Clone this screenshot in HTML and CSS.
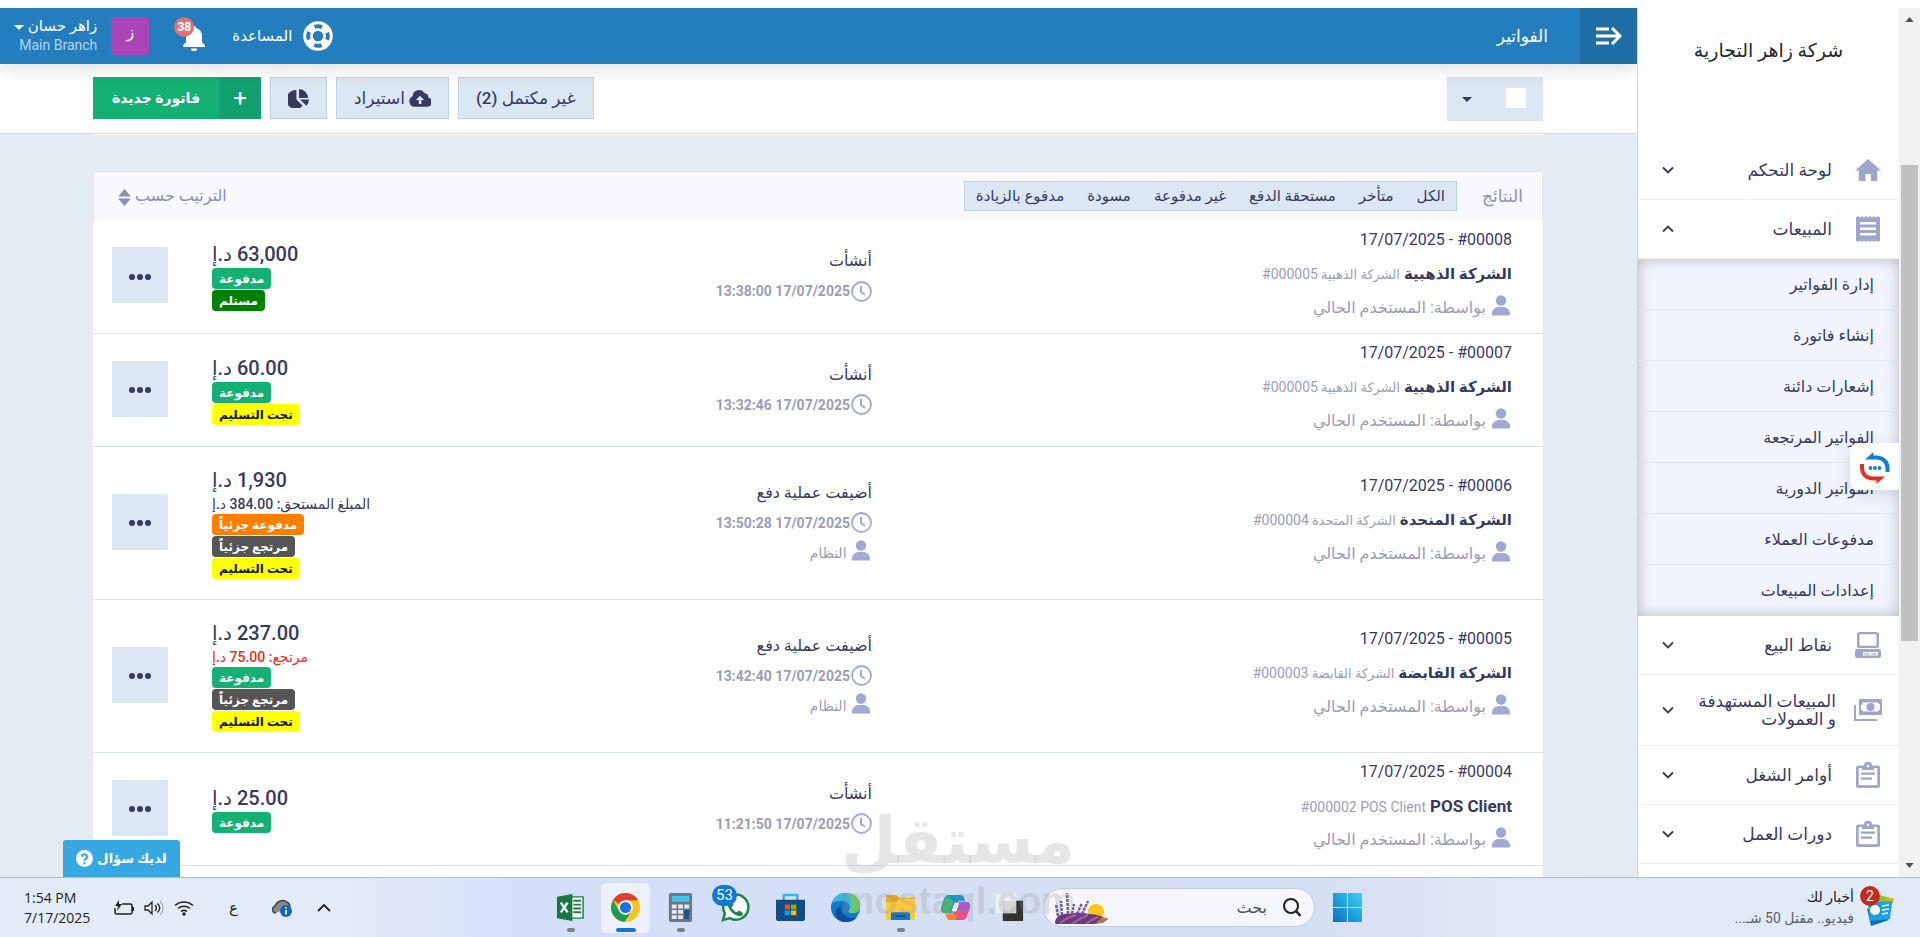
FILE: index.html
```html
<!DOCTYPE html>
<html lang="ar" dir="rtl">
<head>
  <meta charset="UTF-8">
  <meta name="viewport" content="width=device-width, initial-scale=1.0">
  <title>الفواتير</title>
  <link rel="stylesheet" href="styles.css">
</head>
<body>
  <svg class="sprite" aria-hidden="true">
    <symbol id="i-user" viewBox="0 0 18 21"><circle cx="9" cy="5.5" r="5.2"/><path d="M0 20.500V18.500C0 14.500 3.500 12 7 12h4c3.500 0 7 2.500 7 6.500v2z"/></symbol>
    <symbol id="i-clock" viewBox="0 0 21 21"><circle cx="10.500" cy="10.500" r="9.500" fill="none" stroke="currentColor" stroke-width="1.800"/><path d="M10 5v6l4 2.800" fill="none" stroke="currentColor" stroke-width="2"/></symbol>
    <symbol id="i-down" viewBox="0 0 12 8"><path d="M1 1.500l5 5 5-5" fill="none" stroke="currentColor" stroke-width="1.900"/></symbol>
    <symbol id="i-clip" viewBox="0 0 24 26"><path d="M2.500 3.500H8a4 4 0 0 1 8 0h5.500A2.500 2.500 0 0 1 24 6v17.500a2.500 2.500 0 0 1-2.500 2.500h-19A2.500 2.500 0 0 1 0 23.500V6a2.500 2.500 0 0 1 2.500-2.500zM2.700 6v17.300h18.600V6H18v2H6V6zM5 10.500v2.200h14v-2.200zM5 15.500v2.300h11v-2.300z" fill-rule="evenodd"/><circle cx="12" cy="4" r="1.200" fill="#fff"/></symbol>
    <symbol id="i-dots" viewBox="0 0 24 8"><circle cx="4" cy="4" r="3"/><circle cx="12" cy="4" r="3"/><circle cx="20" cy="4" r="3"/></symbol>
  </svg>

  <div class="app">
    <div class="scrollbar">
      <svg class="arrow" viewBox="0 0 10 6"><path d="M0 6l5-6 5 6z"/></svg>
      <div class="thumb"></div>
      <svg class="arrow" viewBox="0 0 10 6"><path d="M0 0l5 6 5-6z"/></svg>
    </div>

    <nav class="sidebar">
      <div class="company">شركة زاهر التجارية</div>
      <a class="item" href="#">
        <svg class="item-icon" viewBox="0 0 26 26"><path d="M13 2l13 11.500h-3.700V24H16v-7h-5.500v7H3.700V13.500H0z"/></svg>
        <span>لوحة التحكم</span>
        <svg class="chevron"><use href="#i-down"/></svg>
      </a>
      <a class="item open" href="#">
        <svg class="item-icon" viewBox="0 0 26 26"><path d="M1 1.500l2-1.500 2 1.500L7 0l2 1.500L11 0l2 1.500L15 0l2 1.500L19 0l2 1.500L23 0l2 1.500v23L23 26l-2-1.500-2 1.500-2-1.500-2 1.500-2-1.500-2 1.500-2-1.500L7 26l-2-1.500L3 26l-2-1.500zM5 6v2.500h16V6zm0 5.500V14h16v-2.500zM5 17v2.500h16V17z" fill-rule="evenodd"/></svg>
        <span>المبيعات</span>
        <svg class="chevron"><use href="#i-down"/></svg>
      </a>
      <div class="submenu">
        <a href="#">إدارة الفواتير</a>
        <a href="#">إنشاء فاتورة</a>
        <a href="#">إشعارات دائنة</a>
        <a href="#">الفواتير المرتجعة</a>
        <a href="#">الفواتير الدورية</a>
        <a href="#">مدفوعات العملاء</a>
        <a href="#">إعدادات المبيعات</a>
      </div>
      <a class="item" href="#">
        <svg class="item-icon" viewBox="0 0 26 26"><path d="M4.500 0h17A2.500 2.500 0 0 1 24 2.500v11a2.500 2.500 0 0 1-2.500 2.500h-17A2.500 2.500 0 0 1 2 13.500v-11A2.500 2.500 0 0 1 4.500 0zm0 2.200v11.600h17V2.200zM2.500 17h21a2.500 2.500 0 0 1 2.500 2.500v4a2.500 2.500 0 0 1-2.500 2.500h-21A2.500 2.500 0 0 1 0 23.500v-4A2.500 2.500 0 0 1 2.500 17zM8 20v3.500h15V20zm1.300 1.200h5v1.200h-5zm7 0h5v1.200h-5z" fill-rule="evenodd"/></svg>
        <span>نقاط البيع</span>
        <svg class="chevron"><use href="#i-down"/></svg>
      </a>
      <a class="item tall" href="#">
        <svg class="item-icon" viewBox="0 0 28 22"><path d="M5 0h23v16H5zm3.500 3v2A2 2 0 0 1 7 6v4.500a2.500 2.500 0 0 1 2 2h15a2.500 2.500 0 0 1 2-2V5.500a2.500 2.500 0 0 1-2-2H9zM0 6h2v14h21v2H0z" fill-rule="evenodd"/><circle cx="16.500" cy="8" r="4"/></svg>
        <span>المبيعات المستهدفة<br>و العمولات</span>
        <svg class="chevron"><use href="#i-down"/></svg>
      </a>
      <a class="item" href="#">
        <svg class="item-icon"><use href="#i-clip"/></svg>
        <span>أوامر الشغل</span>
        <svg class="chevron"><use href="#i-down"/></svg>
      </a>
      <a class="item" href="#">
        <svg class="item-icon"><use href="#i-clip"/></svg>
        <span>دورات العمل</span>
        <svg class="chevron"><use href="#i-down"/></svg>
      </a>
      <button class="chat-widget" aria-label="chat">
        <svg viewBox="0 0 30 32"><path d="M5 7.500L13.500 0v3.500H16c8 0 13.500 5 13.500 12V20h-4v-3C25.500 10.500 21 7.500 16 7.500z" fill="#0f7fdc"/><path d="M25 24.500L16.500 32v-3.500H14C5.500 28.500 0 23 0 16v-4h4v3.500c0 6.500 4.500 9 10 9z" fill="#e03122"/><g fill="#0f7fdc"><circle cx="10.500" cy="16" r="1.900"/><circle cx="15" cy="16" r="1.900"/><circle cx="19.500" cy="16" r="1.900"/></g></svg>
      </button>
    </nav>

    <main class="main">
      <header class="header">
        <button class="toggle" aria-label="menu">
          <svg viewBox="0 0 26 18"><path d="M0 2h13M0 9h23M0 16h13M16 1l8 8-8 8" fill="none" stroke="#fff" stroke-width="3"/></svg>
        </button>
        <h1>الفواتير</h1>
        <a class="help" href="#">
          <svg viewBox="0 0 30 30"><circle cx="15" cy="15" r="10" fill="none" stroke="#fff" stroke-width="9.500"/><circle cx="15" cy="15" r="9.800" fill="none" stroke="#247dbd" stroke-width="4" stroke-dasharray="7.700 7.700" stroke-dashoffset="3.850"/></svg>
          <span>المساعدة</span>
        </a>
        <a class="bell" href="#">
          <svg viewBox="0 0 22 25"><path d="M11 0a2 2 0 0 1 2 2c4 1 6 4.500 6 8v6l3 3.500V21H0v-1.500L3 16v-6c0-3.500 2-7 6-8a2 2 0 0 1 2-2zM8 22.500h6a3 3 0 0 1-6 0z" fill="#fff"/></svg>
          <span class="count">38</span>
        </a>
        <span class="avatar">ز</span>
        <button class="account">
          <span class="account-name">زاهر حسان <i class="caret"></i></span>
          <span class="branch">Main Branch</span>
        </button>
      </header>

      <div class="toolbar">
        <div class="select-all">
          <input type="checkbox" aria-label="تحديد الكل">
          <i class="caret"></i>
        </div>
        <div class="actions">
          <button class="btn">غير مكتمل (2)</button>
          <button class="btn">
            <svg class="cloud" viewBox="0 0 24 18"><path d="M6 18a6 6 0 0 1-2-11.500A7 7 0 0 1 17 3.200 4 4 0 0 1 21 8a5 5 0 0 1-2 10zm4.700-3h2.800v-4.500h3L12 6l-4.500 4.500h3.200z" fill-rule="evenodd"/></svg>
            استيراد
          </button>
          <button class="btn pie" aria-label="التقارير">
            <svg viewBox="0 0 20 18"><path d="M8 1v9l6 6A9 9 0 1 1 8 1z"/><path d="M10.500 0A8.500 8.500 0 0 1 19 8.500h-8.500zM11.500 10H20a9 9 0 0 1-2.500 6z"/></svg>
          </button>
          <button class="btn-new"><span class="plus">+</span><span class="label">فاتورة جديدة</span></button>
        </div>
      </div>

      <div class="content">
        <section class="card">
          <div class="card-head">
            <h2>النتائج</h2>
            <div class="filters">
              <a href="#">الكل</a>
              <a href="#">متأخر</a>
              <a href="#">مستحقة الدفع</a>
              <a href="#">غير مدفوعة</a>
              <a href="#">مسودة</a>
              <a href="#">مدفوع بالزيادة</a>
            </div>
            <button class="sort">الترتيب حسب
              <svg viewBox="0 0 12 16"><path d="M0 7l6-7 6 7zM0 9l6 7 6-7z"/></svg>
            </button>
          </div>

          <table class="invoices">
            <tr>
              <td class="client">
                <div><bdi dir="ltr">17/07/2025 - #00008</bdi></div>
                <div><b>الشركة الذهبية</b> <small>الشركة الذهبية <bdi dir="ltr">#000005</bdi></small></div>
                <div class="by"><svg class="user"><use href="#i-user"/></svg> بواسطة: <span>المستخدم الحالي</span></div>
              </td>
              <td class="status">
                <div>أنشأت</div>
                <div class="time"><svg><use href="#i-clock"/></svg><bdi dir="ltr">13:38:00 17/07/2025</bdi></div>
              </td>
              <td class="amount">
                <div class="price">63,000 د.إ</div>
                <div><span class="badge paid">مدفوعة</span></div>
                <div><span class="badge received">مستلم</span></div>
              </td>
              <td class="more"><button aria-label="خيارات"><svg><use href="#i-dots"/></svg></button></td>
            </tr>
            <tr>
              <td class="client">
                <div><bdi dir="ltr">17/07/2025 - #00007</bdi></div>
                <div><b>الشركة الذهبية</b> <small>الشركة الذهبية <bdi dir="ltr">#000005</bdi></small></div>
                <div class="by"><svg class="user"><use href="#i-user"/></svg> بواسطة: <span>المستخدم الحالي</span></div>
              </td>
              <td class="status">
                <div>أنشأت</div>
                <div class="time"><svg><use href="#i-clock"/></svg><bdi dir="ltr">13:32:46 17/07/2025</bdi></div>
              </td>
              <td class="amount">
                <div class="price">60.00 د.إ</div>
                <div><span class="badge paid">مدفوعة</span></div>
                <div><span class="badge pending">تحت التسليم</span></div>
              </td>
              <td class="more"><button aria-label="خيارات"><svg><use href="#i-dots"/></svg></button></td>
            </tr>
            <tr>
              <td class="client">
                <div><bdi dir="ltr">17/07/2025 - #00006</bdi></div>
                <div><b>الشركة المنحدة</b> <small>الشركة المتحدة <bdi dir="ltr">#000004</bdi></small></div>
                <div class="by"><svg class="user"><use href="#i-user"/></svg> بواسطة: <span>المستخدم الحالي</span></div>
              </td>
              <td class="status">
                <div>أضيفت عملية دفع</div>
                <div class="time"><svg><use href="#i-clock"/></svg><bdi dir="ltr">13:50:28 17/07/2025</bdi></div>
                <div class="system"><svg class="user"><use href="#i-user"/></svg> النظام</div>
              </td>
              <td class="amount">
                <div class="price">1,930 د.إ</div>
                <div class="note">المبلغ المستحق: 384.00 د.إ</div>
                <div><span class="badge partial">مدفوعة جزئياً</span></div>
                <div><span class="badge returned">مرتجع جزئياً</span></div>
                <div><span class="badge pending">تحت التسليم</span></div>
              </td>
              <td class="more"><button aria-label="خيارات"><svg><use href="#i-dots"/></svg></button></td>
            </tr>
            <tr>
              <td class="client">
                <div><bdi dir="ltr">17/07/2025 - #00005</bdi></div>
                <div><b>الشركة القابضة</b> <small>الشركة القابضة <bdi dir="ltr">#000003</bdi></small></div>
                <div class="by"><svg class="user"><use href="#i-user"/></svg> بواسطة: <span>المستخدم الحالي</span></div>
              </td>
              <td class="status">
                <div>أضيفت عملية دفع</div>
                <div class="time"><svg><use href="#i-clock"/></svg><bdi dir="ltr">13:42:40 17/07/2025</bdi></div>
                <div class="system"><svg class="user"><use href="#i-user"/></svg> النظام</div>
              </td>
              <td class="amount">
                <div class="price">237.00 د.إ</div>
                <div class="note refund">مرتجع: 75.00 د.إ</div>
                <div><span class="badge paid">مدفوعة</span></div>
                <div><span class="badge returned">مرتجع جزئياً</span></div>
                <div><span class="badge pending">تحت التسليم</span></div>
              </td>
              <td class="more"><button aria-label="خيارات"><svg><use href="#i-dots"/></svg></button></td>
            </tr>
            <tr>
              <td class="client">
                <div><bdi dir="ltr">17/07/2025 - #00004</bdi></div>
                <div><b><bdi>POS Client</bdi></b> <small><bdi dir="ltr">#000002 POS Client</bdi></small></div>
                <div class="by"><svg class="user"><use href="#i-user"/></svg> بواسطة: <span>المستخدم الحالي</span></div>
              </td>
              <td class="status">
                <div>أنشأت</div>
                <div class="time"><svg><use href="#i-clock"/></svg><bdi dir="ltr">11:21:50 17/07/2025</bdi></div>
              </td>
              <td class="amount">
                <div class="price">25.00 د.إ</div>
                <div><span class="badge paid">مدفوعة</span></div>
              </td>
              <td class="more"><button aria-label="خيارات"><svg><use href="#i-dots"/></svg></button></td>
            </tr>
          </table>
        </section>
      </div>

      <button class="question">لديك سؤال
        <svg viewBox="0 0 16 16"><circle cx="8" cy="8" r="8" fill="#fff"/><path d="M5.500 6.300a2.500 2.300 0 1 1 3.700 2C8.300 8.800 8 9.200 8 10M8 11.300v2" fill="none" stroke="#37a8e2" stroke-width="2"/></svg>
      </button>
    </main>
  </div>

  <footer class="taskbar">
    <div class="news">
      <span class="news-icon">
        <svg viewBox="0 0 30 36"><path d="M12 4l18 5-4 12-16-4z" fill="#8fc31f"/><path d="M22 8l8 1-3 8z" fill="#f2b01e"/><path d="M3 18l22 12-18 6z" fill="#0a6fae"/><path d="M4 13l24-2-2 18-20 2z" fill="#1c9fe8"/><circle cx="11" cy="20" r="5" fill="#fff"/><path d="M18 16l7-1M18 20l7-1M18 24l6-1" stroke="#fff" stroke-width="1.500"/></svg>
        <span class="news-count">2</span>
      </span>
      <div>
        <div>أخبار لك</div>
        <div class="sub">فيديو.. مقتل 50 شـ...</div>
      </div>
    </div>

    <div class="dock">
      <button class="slot" aria-label="Start"><svg viewBox="0 0 30 30"><defs><linearGradient id="win" x1="1" y1="0" x2="0" y2="1"><stop offset="0" stop-color="#3fd0f5"/><stop offset="1" stop-color="#0670c8"/></linearGradient></defs><path d="M0 0h14.500v14.500H0zM15.500 0H30v14.500H15.500zM0 15.500h14.500V30H0zM15.500 15.500H30V30H15.500z" fill="url(#win)"/></svg></button>
      <label class="search">
        <svg class="lens" viewBox="0 0 18 19"><circle cx="8" cy="8" r="7" fill="none" stroke="#222" stroke-width="2"/><path d="M13 13l4.500 5" stroke="#222" stroke-width="2.500"/></svg>
        <input type="text" placeholder="بحث">
        <svg class="lavender" viewBox="0 0 54 32"><circle cx="42" cy="20" r="8" fill="#fcc419"/><path d="M1 31c0-6 6-10 14-9 8-2 14-1 20 0 8 0 14 3 19 5-4 4-10 5-18 5H2z" fill="#6b3a86"/><path d="M6 31q8-6 16-8M18 32q8-6 16-9M32 32q6-5 12-7" fill="none" stroke="#a9608c" stroke-width="2"/><path d="M42 31l6-6 6 2-5 4z" fill="#b5793f"/><path d="M4 24L2 12M8 23L7 9M14 22L13 1M18 22l2-10M23 22l5-11M28 22l6-13" stroke="#6d5b93" stroke-width="2.500" stroke-dasharray="3 1"/></svg>
      </label>
      <button class="slot" aria-label="Task view"><svg viewBox="0 0 30 30"><path d="M7 8h21v21H7z" fill="#333"/><path d="M0 1h21v20H0z" fill="#f4f4f4" opacity=".85"/></svg></button>
      <button class="slot" aria-label="Copilot"><svg viewBox="0 0 30 30"><path d="M8 2h12c3 0 4 2 5 6h-7l-6 13H4c-4 0-5-4-3-9 2-6 3-10 7-10z" fill="#1793d1"/><path d="M1 13l4-9 8 4-4 13H4c-3 0-4-3-3-8z" fill="#43b56f"/><path d="M22 28H10c-3 0-4-2-5-6h7l6-13h8c4 0 5 4 3 9-2 6-3 10-7 10z" fill="#e8508d"/><path d="M18 9h8c4 0 5 4 3 9H15z" fill="#a957d0"/><path d="M5 22h12l-2 6h-5c-3 0-4-2-5-6z" fill="#f1892f"/><path d="M14 10h5l-3 9h-5z" fill="#fff"/></svg></button>
      <button class="slot running" aria-label="Files"><svg viewBox="0 0 30 28"><path d="M0 1h11l3 3h16v23H0z" fill="#e9a820"/><path d="M0 8h11l3-3h16v22H0z" fill="#fdcb3d"/><path d="M5 27v-6a2 2 0 0 1 2-2h16a2 2 0 0 1 2 2v6z" fill="#1878c8"/><path d="M10 23h10" stroke="#0d4e8c" stroke-width="2"/></svg></button>
      <button class="slot" aria-label="Edge"><svg viewBox="0 0 30 30"><circle cx="15" cy="15" r="15" fill="#1478cc"/><path d="M1 11C3 3 9 0 15 0c9 0 15 6 15 13 0 5-4 8-8 8-3 0-4-1-4-2 1-2 2-3 1-6-2-5-11-7-18-2z" fill="#39b8d8"/><path d="M17 0c8 1 13 7 13 13 0 5-4 8-8 8-3 0-4-1-4-2 5-5 4-13-1-19z" fill="#6acb62"/><path d="M11 13c-3 7 4 15 16 12-5 6-14 6-19 3-6-5-4-13 3-15z" fill="#0b4f9c"/></svg></button>
      <button class="slot" aria-label="Store"><svg viewBox="0 0 30 30"><path d="M8 8V2h14v6" fill="none" stroke="#36b3ea" stroke-width="2.500"/><path d="M0 7h30v19a3 3 0 0 1-3 3H3a3 3 0 0 1-3-3z" fill="#174a80"/><path d="M9 12h5.500v5H9z" fill="#f25022"/><path d="M15.500 12H21v5h-5.500z" fill="#7fba00"/><path d="M9 18h5.500v5H9z" fill="#00a4ef"/><path d="M15.500 18H21v5h-5.500z" fill="#ffb900"/></svg></button>
      <button class="slot" aria-label="WhatsApp"><svg viewBox="0 0 30 30"><path d="M2 28l2-7a13 13 0 1 1 5 5z" fill="#fff" stroke="#19854a" stroke-width="2.500"/><path d="M10 8l3 4-2 3c1 2 3 4 5 5l3-2 4 3c-1 3-4 4-7 2-5-2-8-6-9-10 0-2 1-4 3-5z" fill="#19854a"/></svg><span class="msg-count">53</span></button>
      <button class="slot running" aria-label="Calculator"><svg viewBox="0 0 30 30"><rect x="3" width="24" height="30" rx="2" fill="#6f7880"/><path d="M6 3h18v6H6z" fill="#45c4f0"/><path d="M6 12h5v4H6zM12.500 12h5v4h-5zM19 12h5v4h-5zM6 17.500h5v4H6zM12.500 17.500h5v4h-5zM6 23h5v4H6zM12.500 23h5v4h-5z" fill="#e6e9ec"/><path d="M19 17.500h5V27h-5z" fill="#17528f"/></svg></button>
      <button class="slot active" aria-label="Chrome"><svg viewBox="0 0 30 30"><circle cx="15" cy="15" r="15" fill="#fcc31e"/><path d="M15 15L2 7.500A15 15 0 0 1 28 7.500H15z" fill="#e33b2e"/><path d="M2 7.500A15 15 0 0 0 14 30l7.500-11.500L15 15 8.500 18.500z" fill="#239a52"/><circle cx="15" cy="15" r="7.500" fill="#fff"/><circle cx="15" cy="15" r="5.800" fill="#1b72e0"/></svg></button>
      <button class="slot running" aria-label="Excel"><svg viewBox="0 0 30 30"><path d="M15 4h13v22H15z" fill="#fff" stroke="#1f7a45" stroke-width="1.500"/><path d="M18 8h8M18 12h8M18 16h8M18 20h8" stroke="#1f7a45" stroke-width="2"/><path d="M1 4l16-3v28L1 26z" fill="#1b7742"/><path d="M5 10l7 10M12 10L5 20" stroke="#fff" stroke-width="2.500"/></svg></button>
    </div>

    <div class="tray">
      <svg class="tray-up" viewBox="0 0 14 9"><path d="M1 8l6-6 6 6" fill="none" stroke="#222" stroke-width="1.800"/></svg>
      <svg class="tray-cloud" viewBox="0 0 20 18"><path d="M4 14c-4 0-5-5-1-7C5 2 11 0 15 3c2 1 3 3 3 5" fill="#8a8a8a" stroke="#444" stroke-width="1.400"/><circle cx="14" cy="12" r="6" fill="#1069bd"/><path d="M14 8v1.600M14 11v4.500" stroke="#fff" stroke-width="1.600"/></svg>
      <span class="lang">ع</span>
      <div class="system-icons">
        <svg viewBox="0 0 20 16"><g fill="none" stroke="#222" stroke-width="1.500"><path d="M1 5.500a13 13 0 0 1 18 0M4 8.500a9 9 0 0 1 12 0M7 11.500a5 5 0 0 1 6 0"/></g><circle cx="10" cy="14" r="1.700"/></svg>
        <svg viewBox="0 0 20 16"><path d="M1 6h3l4-4v12l-4-4H1zM11 5c2 2 2 4 0 6M13.500 3.500c3 3 3 6 0 9" fill="none" stroke="#222" stroke-width="1.300"/><path d="M16 1c4 4 4 10 0 14" fill="none" stroke="#aaa" stroke-width="1.200"/></svg>
        <svg viewBox="0 0 20 16"><path d="M8 4h8.500a1.500 1.500 0 0 1 1.500 1.500v7a1.500 1.500 0 0 1-1.500 1.500h-14A1.500 1.500 0 0 1 1 12.500V8" fill="none" stroke="#222" stroke-width="1.500"/><path d="M18 7h2v4h-2zM5 0L1 6h3l-1 5 5-7H5z"/></svg>
      </div>
      <div class="clock">
        <div>1:54 PM</div>
        <div>7/17/2025</div>
      </div>
    </div>
  </footer>

  <div class="watermark">
    <div class="watermark-ar">مستقل</div>
    <div class="watermark-en">mostaql.com</div>
  </div>
</body>
</html>
```

FILE: styles.css
```css
:root {
  --text: #373a5e;
  --muted: #9b9db5;
  --icon: #9fa6cb;
  --icon-blue: #9fa9d6;
  --blue: #247dbd;
  --green: #15b073;
  --soft: #dbe7f2;
  --line: #dee3e6;
}
* {
  box-sizing: border-box;
}
body {
  margin: 0;
  height: 100vh;
  overflow: hidden;
  display: flex;
  flex-direction: column;
  padding-top: 8px;
  font-family: Roboto, "DejaVu Sans", sans-serif;
  font-size: 16px;
  color: var(--text);
  background: #fff;
}
a {
  color: inherit;
  text-decoration: none;
}
button {
  font: inherit;
  color: inherit;
  border: none;
  padding: 0;
  background: none;
  cursor: pointer;
}
svg {
  fill: currentColor;
}
.sprite {
  display: none;
}
.app {
  flex: 1;
  min-height: 0;
  display: flex;
}

/* scrollbar */
.scrollbar {
  width: 21px;
  background: #f1f1f1;
  display: flex;
  flex-direction: column;
  align-items: center;
  padding: 9px 0;
  color: #505050;
}
.arrow {
  width: 9px;
  height: 5px;
}
.thumb {
  width: 17px;
  height: 476px;
  margin: 143px 0 auto;
  background: #c1c1c1;
}

/* sidebar */
.sidebar {
  position: relative;
  width: 262px;
  background: #fff;
  border-left: 1px solid #ced2d6;
  overflow: hidden;
}
.company {
  height: 133px;
  padding-top: 28px;
  text-align: center;
  font-size: 19px;
  line-height: 30px;
  color: #26282c;
}
.item {
  display: flex;
  align-items: center;
  height: 59px;
  padding: 0 17px 0 24px;
  border-bottom: 1px solid #eef0f1;
  font-size: 17px;
  font-weight: 500;
}
.item span {
  flex: 1;
  padding-right: 22px;
}
.item.tall {
  height: 71px;
  line-height: 18px;
}
.item.tall span {
  padding-right: 18px;
}
.item-icon {
  width: 28px;
  height: 26px;
  color: var(--icon);
}
.chevron {
  width: 12px;
  height: 8px;
}
.open .chevron {
  transform: rotate(180deg);
}
.submenu {
  background: #f1f4fc;
  box-shadow: inset 0 0 14px rgba(0, 0, 0, 0.25);
}
.submenu a {
  display: flex;
  align-items: center;
  height: 51px;
  padding-right: 25px;
  border-bottom: 1px solid #e2e6eb;
  font-weight: 500;
}
.submenu a:last-child {
  border-bottom: none;
}
.chat-widget {
  position: absolute;
  right: 0;
  top: 435px;
  width: 49px;
  height: 47px;
  padding: 6px 0 0;
  background: #fff;
  border-radius: 8px 0 0 8px;
  box-shadow: 0 4px 16px rgba(0, 0, 0, 0.12);
}
.chat-widget svg {
  width: 30px;
  height: 32px;
}

/* header */
.main {
  position: relative;
  flex: 1;
  min-width: 0;
  display: flex;
  flex-direction: column;
  overflow: hidden;
  background: #e4ebf2;
}
.header {
  position: relative;
  flex: none;
  display: flex;
  align-items: center;
  height: 56px;
  padding-left: 14px;
  background: var(--blue);
  color: #fff;
  box-shadow: 0 6px 18px rgba(0, 0, 0, 0.12);
}
.toggle {
  width: 57px;
  height: 56px;
  background: #206ea6;
}
.toggle svg {
  display: block;
  width: 26px;
  height: 18px;
  margin: 0 auto;
}
.header h1 {
  margin: 0 32px 0 auto;
  font-size: 17px;
  font-weight: 400;
}
.help {
  display: flex;
  align-items: center;
  gap: 11px;
  font-size: 15px;
}
.help svg {
  width: 30px;
  height: 30px;
}
.bell {
  position: relative;
  margin: 4px 27px 0 34px;
}
.bell svg {
  display: block;
  width: 22px;
  height: 25px;
}
.count {
  position: absolute;
  left: -9px;
  top: -9px;
  width: 20px;
  height: 20px;
  border-radius: 50%;
  background: #de7173;
  font-size: 12px;
  font-weight: 700;
  line-height: 20px;
  text-align: center;
}
.avatar {
  width: 38px;
  height: 38px;
  border-radius: 4px;
  background: #a945b9;
  text-align: center;
  line-height: 30px;
}
.account {
  margin-right: 14px;
  text-align: right;
  color: #fff;
}
.account span {
  display: block;
  line-height: 19px;
}
.account .branch {
  font-size: 14px;
  color: #b5d5ee;
}
.account-name {
  font-size: 15px;
}
.caret {
  display: inline-block;
  border: 5px solid transparent;
  border-top-color: currentColor;
  border-bottom: none;
  vertical-align: middle;
}

/* toolbar */
.toolbar {
  flex: none;
  display: flex;
  justify-content: space-between;
  height: 70px;
  padding: 13px 94px 0 93px;
  background: #fff;
  border-bottom: 1px solid #d6dce2;
}
.select-all {
  display: flex;
  align-items: center;
  gap: 34px;
  width: 96px;
  height: 44px;
  padding-right: 17px;
  background: var(--soft);
}
.select-all input {
  appearance: none;
  width: 20px;
  height: 20px;
  margin: 0 0 3px;
  background: #fff;
}
.actions {
  display: flex;
  gap: 9px;
}
.btn {
  display: flex;
  align-items: center;
  gap: 4px;
  height: 42px;
  padding: 0 17px;
  background: var(--soft);
  border: 1px solid #bdd3e8;
  font-size: 17px;
  font-weight: 500;
}
.cloud {
  width: 22px;
  height: 17px;
}
.pie svg {
  width: 21px;
  height: 19px;
}
.btn-new {
  display: flex;
  height: 42px;
  line-height: 42px;
  background: var(--green);
  color: #fff;
  font-size: 14px;
  font-weight: 700;
}
.plus {
  width: 42px;
  background: #13a06f;
  font-size: 24px;
  font-weight: 400;
}
.label {
  padding: 0 19px;
}

/* results */
.content {
  flex: 1;
  display: flex;
  flex-direction: column;
  margin: 0 94px 0 93px;
  padding-top: 36px;
  border-top: 1px solid #fff;
}
.card {
  flex: 1 0 auto;
  background: #fff;
}
.card-head {
  display: flex;
  align-items: center;
  height: 49px;
  padding: 0 19px 0 24px;
  background: #f7f9fc;
  border: 1px solid #e0e5e9;
  border-bottom: none;
  border-radius: 3px 3px 0 0;
}
.card-head h2 {
  margin: 0 0 0 25px;
  font-size: 17px;
  font-weight: 400;
  color: #9292b4;
}
.filters {
  display: flex;
  align-items: center;
  gap: 23px;
  height: 30px;
  padding: 0 11px;
  background: var(--soft);
  border: 1px solid #bdd3e8;
  font-size: 15px;
  font-weight: 500;
}
.sort {
  margin-right: auto;
  color: #8b8eb8;
}
.sort svg {
  width: 13px;
  height: 17px;
  vertical-align: middle;
}
.invoices {
  width: 100%;
  table-layout: fixed;
  border-collapse: collapse;
}
.invoices td {
  height: 113px;
  padding: 0;
  border-bottom: 1px solid var(--line);
  vertical-align: middle;
}
.invoices .client {
  width: 46%;
  padding: 0 31px 5px 0;
}
.client > div {
  height: 34px;
  line-height: 34px;
}
.client b {
  font-size: 15px;
}
.client b bdi {
  font-size: 17px;
}
.client small {
  font-size: 13px;
  color: var(--muted);
}
.client small bdi {
  font-size: 14px;
}
.client .by {
  color: var(--muted);
}
.by span {
  font-weight: 500;
}
.user {
  width: 18px;
  height: 21px;
  margin: 0 2px;
  vertical-align: -3px;
  color: var(--icon-blue);
}
.invoices .status {
  width: 25%;
  padding-right: 4px;
}
.status > div {
  height: 30px;
  line-height: 30px;
}
.status .time {
  display: flex;
  align-items: center;
  gap: 1px;
  font-size: 14px;
  font-weight: 700;
  color: var(--muted);
}
.time svg {
  width: 21px;
  height: 21px;
  color: var(--icon-blue);
}
.status .system {
  font-size: 14px;
  font-weight: 500;
  color: var(--muted);
}
.invoices .amount {
  padding: 19px 0;
  text-align: left;
}
.amount > div {
  height: 22px;
  line-height: 22px;
}
.amount .price {
  height: 28px;
  line-height: 28px;
  font-size: 20px;
  font-weight: 500;
}
.amount .note {
  height: 20px;
  line-height: 20px;
  font-size: 14px;
  font-weight: 500;
}
.amount .refund {
  color: #ee2a20;
}
.badge {
  display: inline-block;
  height: 21px;
  padding: 0 7px;
  border-radius: 4px;
  font-size: 12px;
  font-weight: 700;
  line-height: 22px;
  color: #fff;
  vertical-align: top;
}
.paid {
  background: var(--green);
}
.received {
  background: #008000;
}
.pending {
  background: #ff0;
  color: #111;
}
.partial {
  background: #ff7e00;
}
.returned {
  background: #555;
}
.invoices .more {
  width: 119px;
  padding: 0 0 2px 19px;
  text-align: left;
}
.more button {
  width: 56px;
  height: 56px;
  background: var(--soft);
}
.more svg {
  width: 24px;
  height: 8px;
}
.question {
  position: absolute;
  left: 63px;
  bottom: 0;
  display: flex;
  align-items: center;
  justify-content: center;
  gap: 4px;
  width: 117px;
  height: 37px;
  border-radius: 3px 3px 0 0;
  background: #37a8e2;
  color: #fff;
  font-size: 13px;
  font-weight: 700;
}
.question svg {
  width: 17px;
  height: 17px;
}

/* taskbar */
.taskbar {
  display: grid;
  grid-template-columns: 1fr auto 1fr;
  align-items: center;
  height: 60px;
  padding: 0 26px 0 24px;
  border-top: 1px solid #b1bccb;
  background: linear-gradient(90deg, #e2ecf7, #e2ebf6 18%, #d3dffa 28%, #d6dff3 50%, #d3dff5 66%, #dbe3f2 74%, #dfeaf4 78%, #e1ebf8);
  color: #222;
}
.news {
  display: flex;
  align-items: center;
  gap: 10px;
  font-size: 14px;
  line-height: 21px;
}
.news .sub {
  color: #5c6068;
}
.news-icon {
  position: relative;
  width: 30px;
  height: 36px;
}
.news-count {
  position: absolute;
  left: -4px;
  top: -4px;
  width: 20px;
  height: 20px;
  border-radius: 50%;
  background: #c42b1c;
  color: #fff;
  font-size: 14px;
  line-height: 20px;
  text-align: center;
}
.dock {
  display: flex;
  align-items: center;
}
.slot {
  position: relative;
  width: 55px;
  height: 50px;
}
.slot svg {
  display: block;
  width: 29px;
  height: 29px;
  margin: auto;
}
.slot.active {
  width: 49px;
  margin: 0 3px;
  border-radius: 5px;
  background: #edf1fb;
}
.running::after,
.active::after {
  content: "";
  position: absolute;
  left: 50%;
  bottom: 1px;
  width: 8px;
  height: 4px;
  margin-left: -4px;
  border-radius: 2px;
  background: #7c828c;
}
.active::after {
  width: 20px;
  margin-left: -10px;
  background: #0f78d4;
}
.msg-count {
  position: absolute;
  left: 4px;
  top: 2px;
  width: 25px;
  height: 21px;
  border-radius: 11px;
  background: #0f78d4;
  color: #fff;
  font-size: 15px;
  line-height: 21px;
}
.search {
  display: flex;
  align-items: center;
  gap: 14px;
  width: 272px;
  height: 39px;
  margin: 0 5px;
  padding: 0 13px 0 10px;
  border: 1px solid #c3cad8;
  border-radius: 20px;
  background: #f4f6fb;
}
.search input {
  flex: 1;
  min-width: 0;
  border: none;
  background: none;
  font: inherit;
  font-size: 16px;
}
.search input::placeholder {
  color: #555;
}
.lens {
  width: 18px;
  height: 19px;
}
.lavender {
  width: 54px;
  height: 32px;
}
.tray {
  display: flex;
  align-items: center;
  justify-content: flex-end;
}
.tray-up {
  width: 14px;
  height: 9px;
}
.tray-cloud {
  width: 20px;
  height: 18px;
  margin: 0 25px 0 34px;
}
.lang {
  font-size: 15px;
}
.system-icons {
  display: flex;
  gap: 10px;
  margin-right: 35px;
}
.system-icons svg {
  width: 20px;
  height: 16px;
}
.clock {
  direction: ltr;
  width: 69px;
  margin-right: 21px;
  font-family: "Open Sans", "Noto Sans", sans-serif;
  font-size: 14px;
  line-height: 20px;
}

/* watermark over the page */
.watermark {
  position: absolute;
  left: 845px;
  bottom: 14px;
  width: 230px;
  color: rgba(140, 140, 140, 0.22);
  text-align: center;
  font-weight: 700;
  white-space: nowrap;
  pointer-events: none;
}
.watermark-ar {
  font-size: 64px;
  line-height: 74px;
}
.watermark-en {
  font-family: "Liberation Sans", Arial, sans-serif;
  font-size: 38px;
  line-height: 44px;
}
```
